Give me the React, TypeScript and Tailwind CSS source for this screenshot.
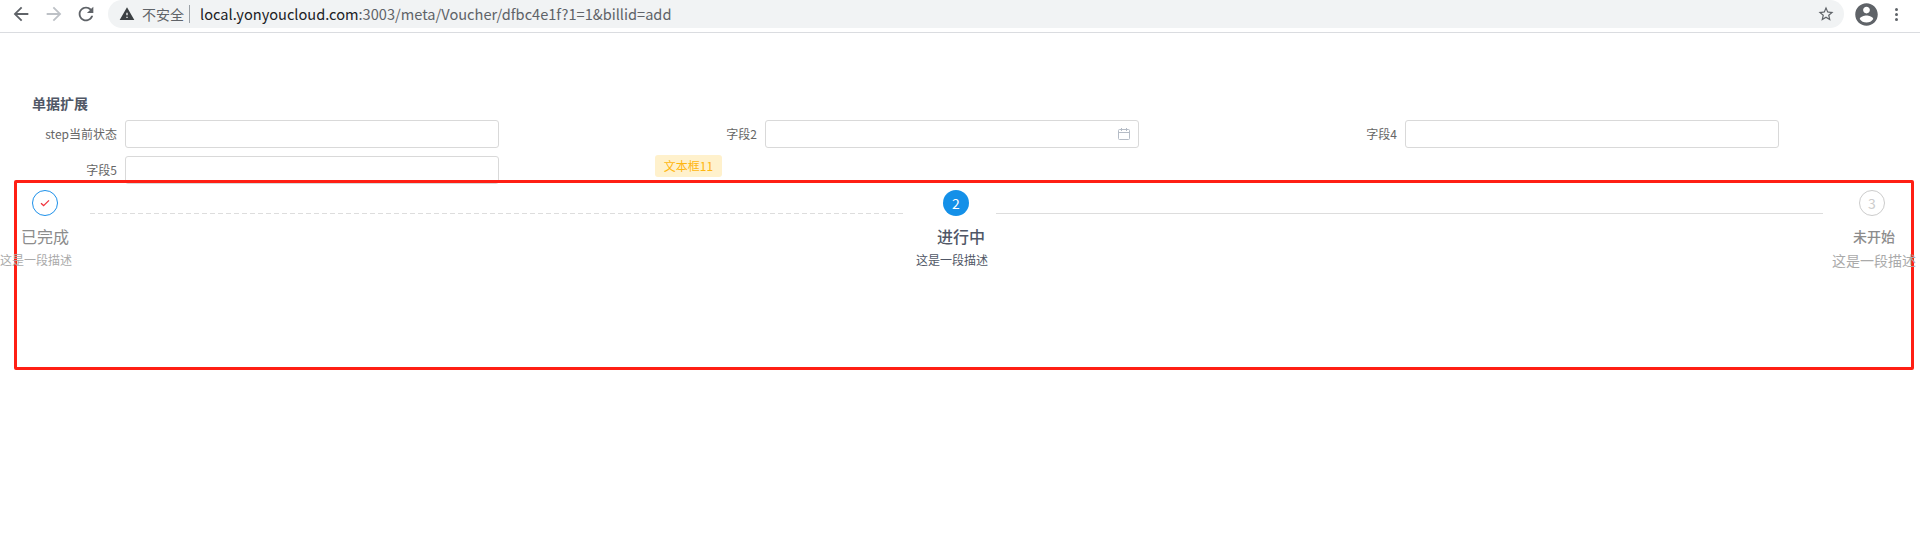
import React from 'react';

const MdIcon = ({ d, className }: { d: string; className: string }) => (
    <svg viewBox="0 0 24 24" className={className} fill="currentColor">
        <path d={d} />
    </svg>
);

const Field = ({ label, icon }: { label: string; icon?: boolean }) => (
    <div className="flex items-center">
        <label className="w-[117px] text-right text-xs text-[#666]">{label}</label>
        <div className="ml-[8px] flex h-[28px] w-[374px] items-center justify-end rounded-[3px] border border-[#d9d9d9] bg-white pr-[8px]">
            {icon && (
                <svg viewBox="0 0 12 12" className="h-[12px] w-[12px] text-[#b5bcc6]" fill="none" stroke="currentColor" strokeWidth="1">
                    <rect x="0.5" y="1.5" width="11" height="10" rx="1" />
                    <path d="M0.5 4.5h11M3.5 0v3M8.5 0v3" />
                </svg>
            )}
        </div>
    </div>
);

const Step = ({
    circle,
    title,
    desc,
    width,
    circleClass,
    titleClass,
    descClass,
}: {
    circle: React.ReactNode;
    title: string;
    desc: string;
    width: string;
    circleClass: string;
    titleClass: string;
    descClass: string;
}) => (
    <div className={`flex shrink-0 flex-col items-start ${width}`}>
        <div className={`flex h-[26px] w-[26px] items-center justify-center rounded-full ${circleClass}`}>{circle}</div>
        <div className={`mt-[9px] h-[22px] leading-[22px] whitespace-nowrap ${titleClass}`}>{title}</div>
        <div className={`mt-[4px] whitespace-nowrap leading-[18px] ${descClass}`}>{desc}</div>
    </div>
);

export default function App() {
    return (
        <div className="h-[542px] w-[1920px] overflow-hidden bg-white font-['Noto_Sans_CJK_SC','Noto_Sans',sans-serif]">
            {/* browser bar */}
            <div className="flex h-[33px] items-start border-b border-[#dadce0] bg-white">
                <div className="flex h-[28px] items-center pl-[10px] text-[#5f6368]">
                    <MdIcon className="h-[22px] w-[22px]" d="M20 11H7.83l5.59-5.59L12 4l-8 8 8 8 1.41-1.41L7.83 13H20v-2z" />
                    <MdIcon className="ml-[11px] h-[22px] w-[22px] text-[#bdc1c6]" d="M12 4l-1.41 1.41L16.17 11H4v2h12.17l-5.58 5.59L12 20l8-8z" />
                    <MdIcon className="ml-[10px] h-[22px] w-[22px]" d="M17.65 6.35C16.2 4.9 14.21 4 12 4c-4.42 0-7.99 3.58-7.99 8s3.57 8 7.99 8c3.73 0 6.84-2.55 7.73-6h-2.08c-.82 2.33-3.04 4-5.65 4-3.31 0-6-2.69-6-6s2.69-6 6-6c1.66 0 3.14.69 4.22 1.78L13 11h7V4l-2.35 2.35z" />
                </div>
                <div className="ml-[11px] flex h-[28px] w-[1736px] items-center rounded-r-full rounded-l-full bg-[#f1f3f4] pl-[11px] pr-[9px]">
                    <MdIcon className="h-[16px] w-[16px] text-[#3c4043]" d="M1 21h22L12 2 1 21zm12-3h-2v-2h2v2zm0-4h-2v-4h2v4z" />
                    <span className="ml-[7px] text-[14px] text-[#5f6368]">不安全</span>
                    <span className="ml-[5px] h-[18px] w-px bg-[#9aa0a6]" />
                    <span className="ml-[10px] text-[14.6px] text-[#5f6368]">
                        <span className="text-[#202124]">local.yonyoucloud.com</span>:3003/meta/Voucher/dfbc4e1f?1=1&amp;billid=add
                    </span>
                    <MdIcon className="ml-auto h-[18px] w-[18px] text-[#5f6368]" d="M22 9.24l-7.19-.62L12 2 9.19 8.63 2 9.24l5.46 4.73L5.82 21 12 17.27 18.18 21l-1.63-7.03L22 9.24zM12 15.4l-3.76 2.27 1-4.28-3.32-2.88 4.38-.38L12 6.1l1.71 4.04 4.38.38-3.32 2.88 1 4.28L12 15.4z" />
                </div>
                <div className="flex h-[28px] items-center text-[#5f6368]">
                    <MdIcon className="ml-[9px] h-[27px] w-[27px]" d="M12 2C6.48 2 2 6.48 2 12s4.48 10 10 10 10-4.48 10-10S17.52 2 12 2zm0 3c1.66 0 3 1.34 3 3s-1.34 3-3 3-3-1.34-3-3 1.34-3 3-3zm0 14.2c-2.5 0-4.71-1.28-6-3.22.03-1.99 4-3.08 6-3.08 1.99 0 5.97 1.09 6 3.08-1.29 1.94-3.5 3.22-6 3.22z" />
                    <div className="ml-[15px] flex flex-col gap-[2px]">
                        <span className="h-[3px] w-[3px] rounded-full bg-[#5f6368]" />
                        <span className="h-[3px] w-[3px] rounded-full bg-[#5f6368]" />
                        <span className="h-[3px] w-[3px] rounded-full bg-[#5f6368]" />
                    </div>
                </div>
            </div>

            {/* form */}
            <div className="pt-[60px]">
                <h2 className="ml-[32px] h-[20px] text-sm leading-[20px] font-bold text-[#505766]">单据扩展</h2>
                <div className="mt-[7px] grid grid-cols-[640px_640px_640px] gap-y-[8px]">
                    <Field label="step当前状态" />
                    <Field label="字段2" icon />
                    <Field label="字段4" />
                    <Field label="字段5" />
                    <div className="-mt-[4px]">
                        <span className="ml-[15px] inline-flex h-[22px] w-[67px] items-center justify-center rounded-[3px] bg-[#fff1cc] text-xs text-[#ffb60f]">
                            文本框11
                        </span>
                    </div>
                </div>
            </div>

            {/* steps, boxed in red over the form */}
            <div className="relative -mt-[4px] ml-[14px] h-[190px] w-[1900px] rounded-[2px] border-[3px] border-[#ff1f14] pt-[7px]">
                <div className="-ml-[17px] flex w-[1916px] items-start">
                    <Step
                        width="w-[72px]"
                        circle={
                            <svg viewBox="0 0 12 12" className="h-[12px] w-[12px]" fill="none" stroke="#f0323c" strokeWidth="1.3">
                                <path d="M2 6.2l2.6 2.4L10 3.4" />
                            </svg>
                        }
                        circleClass="ml-[32px] border border-[#1c90ea]"
                        title="已完成"
                        titleClass="ml-[21px] text-base text-[#8c8c8c]"
                        desc="这是一段描述"
                        descClass="text-xs text-[#aaa]"
                    />
                    <div className="mt-[23px] ml-[18px] h-px flex-1 bg-[repeating-linear-gradient(90deg,#ddd_0,#ddd_5px,transparent_5px,transparent_8px)]" />
                    <div className="ml-[10px]">
                        <Step
                            width="w-[72px]"
                            circle={<span className="text-sm text-white">2</span>}
                            circleClass="ml-[27px] bg-[#1490e8]"
                            title="进行中"
                            titleClass="ml-[21px] text-base font-medium text-[#505766]"
                            desc="这是一段描述"
                            descClass="text-xs text-[#505766]"
                        />
                    </div>
                    <div className="mt-[23px] ml-[8px] h-px w-[827px] bg-[#ddd]" />
                    <div className="ml-[9px]">
                        <Step
                            width="w-[84px]"
                            circle={<span className="text-sm text-[#ccc]">3</span>}
                            circleClass="ml-[27px] border border-[#ccc]"
                            title="未开始"
                            titleClass="ml-[21px] text-sm font-medium text-[#8c8c8c]"
                            desc="这是一段描述"
                            descClass="text-sm text-[#aaa]"
                        />
                    </div>
                </div>
            </div>
        </div>
    );
}
